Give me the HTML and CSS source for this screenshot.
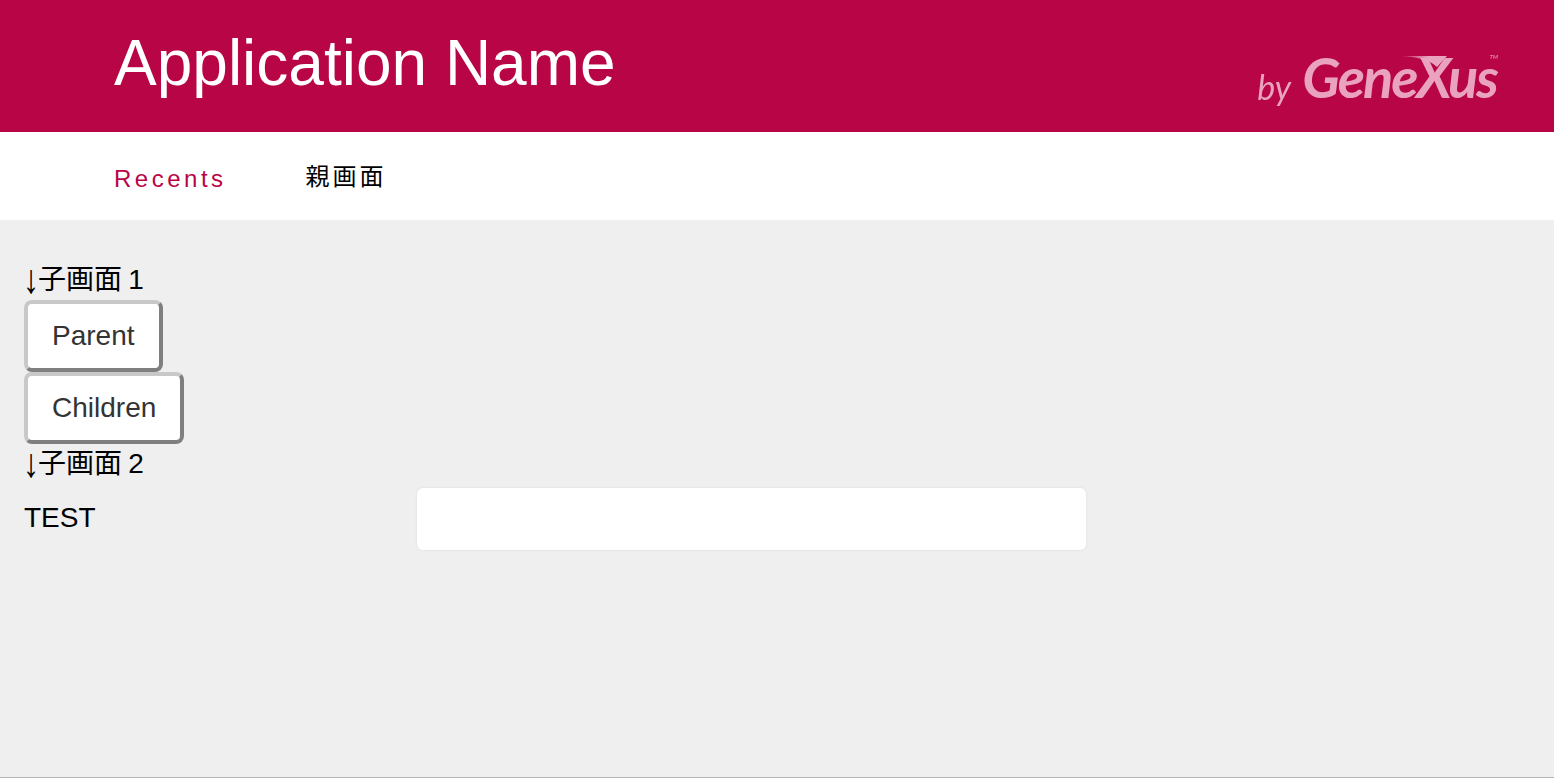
FILE: index.html
```html
<!DOCTYPE html>
<html lang="ja">
<head>
    <meta charset="UTF-8">
    <meta name="viewport" content="width=device-width, initial-scale=1.0">
    <title>Application Name</title>
    <link rel="stylesheet" href="styles.css">
</head>
<body>

    <header class="app-header">
        <div class="app-title">Application Name</div>
        <div class="logo">
            <span class="logo-by">by</span>
            <span class="logo-name">GeneXus</span>
            <svg class="logo-swoosh" width="50" height="14" viewBox="0 0 50 14">
                <defs>
                    <linearGradient id="swoosh">
                        <stop offset="0" stop-color="#e9a3bf" stop-opacity="0.2"/>
                        <stop offset="0.6" stop-color="#e9a3bf"/>
                    </linearGradient>
                </defs>
                <path d="M0 1 H46 L36 12 C28 4 14 2 0 1Z" fill="url(#swoosh)"/>
            </svg>
            <span class="logo-tm">TM</span>
        </div>
    </header>

    <nav class="recents">
        <span class="recents-label">Recents</span>
        <a class="recents-link" href="#">親画面</a>
    </nav>

    <main class="content">
        <div class="text-row"><span class="arrow">↓</span>子画面 1</div>
        <div class="button-row"><button class="btn" type="button">Parent</button></div>
        <div class="button-row"><button class="btn" type="button">Children</button></div>
        <div class="text-row text-row-low"><span class="arrow">↓</span>子画面 2</div>
        <div class="form-row">
            <label class="form-label" for="test">TEST</label>
            <input class="form-input" id="test" type="text">
        </div>
    </main>

</body>
</html>
```

FILE: styles.css
```css
html, body {
    height: 100%;
}
body {
    margin: 0;
    display: flex;
    flex-direction: column;
    height: 778px;
    box-sizing: border-box;
    overflow: hidden;
    font-family: "Liberation Sans", "Noto Sans CJK JP", sans-serif;
    background-color: #efefef;
    border-bottom: 1px solid #b5b5b5;
    color: #000;
}

/* header */
.app-header {
    display: flex;
    align-items: center;
    justify-content: space-between;
    flex: 0 0 132px;
    padding: 0 57px 6px 114px;
    box-sizing: border-box;
    background-color: #b80545;
    color: #fff;
}
.app-title {
    font-size: 64px;
    line-height: 1;
}
.logo {
    display: flex;
    align-items: baseline;
    position: relative;
    margin-top: 28px;
    color: #e9a3bf;
    filter: blur(0.6px);
    font-family: "Lato", "Liberation Sans", sans-serif;
    font-style: italic;
}
.logo-by {
    font-size: 34px;
    margin-right: 11px;
    transform: translateY(2px);
}
.logo-name {
    font-size: 56px;
    font-weight: 700;
    line-height: 1;
    letter-spacing: -2px;
}
.logo-swoosh {
    position: absolute;
    top: 6px;
    right: 46px;
}
.logo-tm {
    position: absolute;
    top: 4px;
    right: -1px;
    font-size: 6px;
}

/* recents bar */
.recents {
    display: flex;
    align-items: center;
    flex: 0 0 88px;
    padding-left: 114px;
    box-sizing: border-box;
    background-color: #fff;
    font-size: 24px;
}
.recents-label {
    margin-top: 6px;
    margin-right: 79px;
    letter-spacing: 3.5px;
    color: #b80545;
}
.recents-link {
    margin-bottom: 4px;
    letter-spacing: 3px;
    color: #000;
    text-decoration: none;
}

/* content */
.content {
    flex: 1;
    padding: 44px 24px 0;
    font-size: 28px;
}
.text-row {
    height: 36px;
    box-sizing: border-box;
    line-height: 32px;
    word-spacing: -1.5px;
}
.text-row-low {
    padding-top: 4px;
}
.arrow {
    display: inline-block;
    transform: translateY(3px) scale(1.15, 1.45);
    transform-origin: center 70%;
}
.button-row {
    display: flex;
}
.btn {
    height: 72px;
    padding: 0 24px;
    font: inherit;
    color: #333;
    background-color: #fff;
    border: 4px solid;
    border-color: #c8c8c8 #7f7f7f #7f7f7f #c8c8c8;
    border-radius: 8px;
    cursor: pointer;
}
.form-row {
    display: grid;
    grid-template-columns: 393px 669px;
    align-items: center;
    margin-top: 8px;
}
.form-label {
    margin-bottom: 2px;
}
.form-input {
    height: 62px;
    box-sizing: border-box;
    border: none;
    border-radius: 6px;
    background-color: #fff;
    box-shadow: 0 0 3px rgba(0, 0, 0, 0.08);
    font: inherit;
}
```
